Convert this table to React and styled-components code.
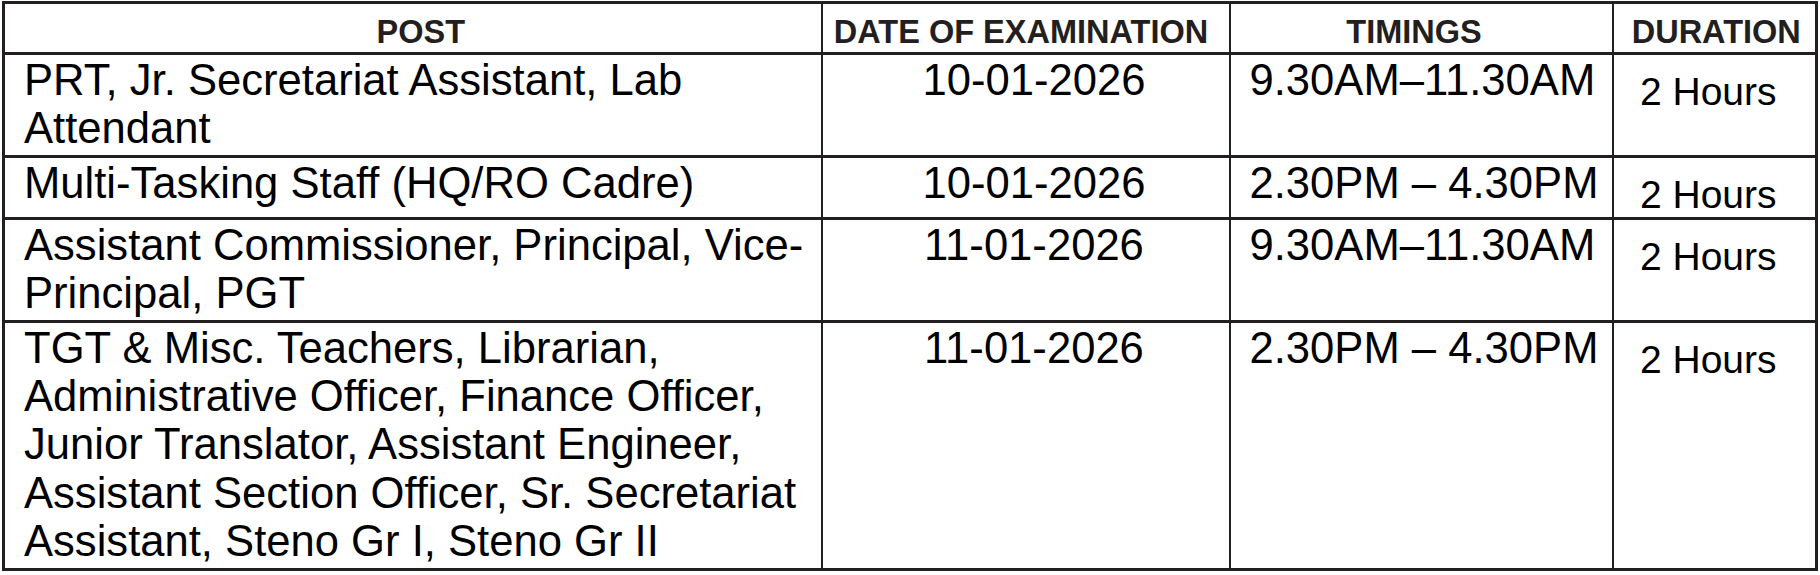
import React from 'react';
import styled, { createGlobalStyle } from 'styled-components';

const GlobalStyle = createGlobalStyle`
  html,
  body {
    margin: 0;
    padding: 0;
    background: #fff;
  }
  body {
    font-family: 'Liberation Sans', Arial, sans-serif;
  }
`;

const Page = styled.div`
  padding: 1px 0 0 2px;
`;

const Schedule = styled.table`
  width: 1816px;
  border-collapse: collapse;
  table-layout: fixed;
  border: 3px solid #231f20;
  font-family: 'Liberation Sans', Arial, sans-serif;
`;

const HeadCell = styled.th`
  padding: 8px ${(p) => p.$padRight || 0}px 0 ${(p) => p.$padLeft || 0}px;
  font-size: 32.5px;
  line-height: 40px;
  font-weight: 700;
  color: #231f20;
  text-align: center;
  white-space: nowrap;
  border-left: 2px solid #231f20;
  border-bottom: 3px solid #231f20;
`;

const Cell = styled.td`
  vertical-align: top;
  padding: 1px ${(p) => p.$padRight || 0}px 2px ${(p) => p.$padLeft || 0}px;
  font-size: 43.6px;
  line-height: 48.4px;
  color: #000;
  text-align: ${(p) => p.$align || 'left'};
  border-left: 2px solid #231f20;
  border-top: 3px solid #231f20;
`;

const DurationCell = styled(Cell)`
  padding: 14px 12px 0 0;
  font-size: 39px;
  line-height: 45px;
  text-align: center;
`;

const schedule = [
  {
    post: 'PRT, Jr. Secretariat Assistant, Lab Attendant',
    date: '10-01-2026',
    time: '9.30AM–11.30AM',
    duration: '2 Hours',
  },
  {
    post: 'Multi-Tasking Staff (HQ/RO Cadre)',
    date: '10-01-2026',
    time: '2.30PM – 4.30PM',
    duration: '2 Hours',
  },
  {
    post: 'Assistant Commissioner, Principal, Vice-Principal, PGT',
    date: '11-01-2026',
    time: '9.30AM–11.30AM',
    duration: '2 Hours',
  },
  {
    post:
      'TGT & Misc. Teachers, Librarian, Administrative Officer, Finance Officer, Junior Translator, Assistant Engineer, Assistant Section Officer, Sr. Secretariat Assistant, Steno Gr I, Steno Gr II',
    date: '11-01-2026',
    time: '2.30PM – 4.30PM',
    duration: '2 Hours',
  },
];

const App = () => (
  <Page>
    <GlobalStyle />
    <Schedule>
      <colgroup>
        <col style={{ width: '818px' }} />
        <col style={{ width: '408px' }} />
        <col style={{ width: '383px' }} />
        <col />
      </colgroup>
      <thead>
        <tr>
          <HeadCell $padLeft={16}>POST</HeadCell>
          <HeadCell $padRight={9}>DATE OF EXAMINATION</HeadCell>
          <HeadCell $padRight={14}>TIMINGS</HeadCell>
          <HeadCell $padLeft={4}>DURATION</HeadCell>
        </tr>
      </thead>
      <tbody>
        {schedule.map((row, index) => (
          <tr key={`exam${index}`}>
            <Cell $padLeft={19} $padRight={6}>
              {row.post}
            </Cell>
            <Cell $align="center" $padLeft={17}>
              {row.date}
            </Cell>
            <Cell $padLeft={19}>{row.time}</Cell>
            <DurationCell>{row.duration}</DurationCell>
          </tr>
        ))}
      </tbody>
    </Schedule>
  </Page>
);

export default App;
